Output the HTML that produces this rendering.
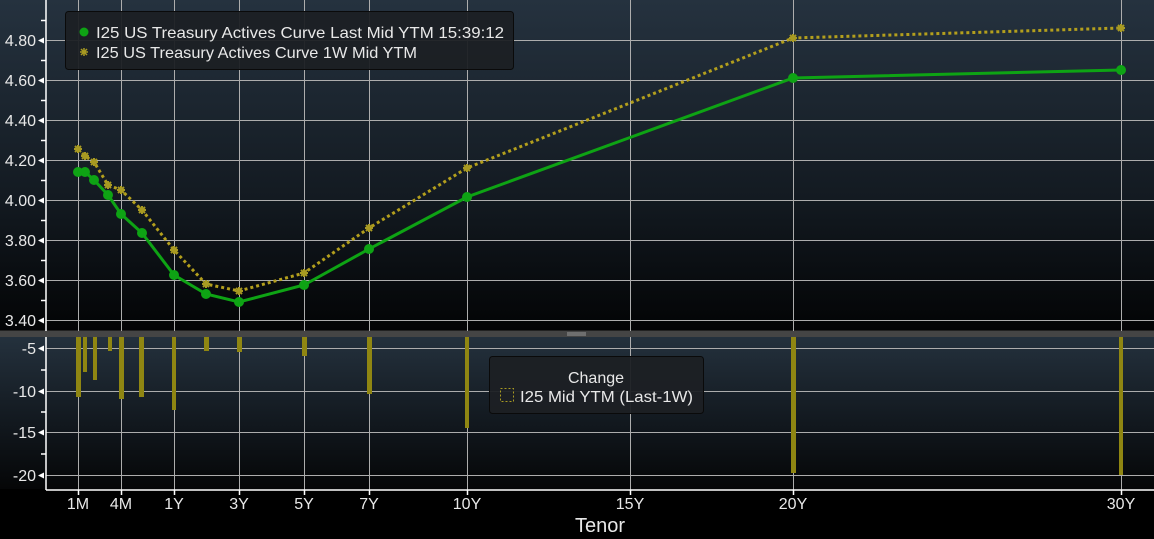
<!DOCTYPE html>
<html><head><meta charset="utf-8"><style>
html,body{margin:0;padding:0;background:#000;width:1154px;height:539px;overflow:hidden}
svg{display:block}
text{font-family:"Liberation Sans",sans-serif;fill:#e8e8e8}
</style></head><body>
<svg width="1154" height="539" viewBox="0 0 1154 539">
<defs>
<linearGradient id="g1" x1="0" y1="0" x2="0" y2="1"><stop offset="0" stop-color="#25323f"/><stop offset="0.6" stop-color="#131a21"/><stop offset="1" stop-color="#030405"/></linearGradient>
<linearGradient id="g2" x1="0" y1="0" x2="0" y2="1"><stop offset="0" stop-color="#24313d"/><stop offset="0.5" stop-color="#141b22"/><stop offset="1" stop-color="#050607"/></linearGradient>
</defs>
<rect width="1154" height="539" fill="#000"/>
<rect x="0" y="0" width="1154" height="331" fill="url(#g1)"/>
<rect x="0" y="337" width="1154" height="152" fill="url(#g2)"/>
<rect x="0" y="331" width="1154" height="6" fill="#454545"/>
<rect x="0" y="330" width="1154" height="1" fill="#222"/>
<line x1="567" y1="333" x2="586" y2="333" stroke="#999"/><line x1="567" y1="335" x2="586" y2="335" stroke="#999"/>
<g stroke="#adadad" stroke-width="1">
<line x1="46" y1="40.5" x2="1154" y2="40.5"/><line x1="46" y1="80.5" x2="1154" y2="80.5"/><line x1="46" y1="120.5" x2="1154" y2="120.5"/><line x1="46" y1="160.5" x2="1154" y2="160.5"/><line x1="46" y1="200.5" x2="1154" y2="200.5"/><line x1="46" y1="240.5" x2="1154" y2="240.5"/><line x1="46" y1="280.5" x2="1154" y2="280.5"/><line x1="46" y1="320.5" x2="1154" y2="320.5"/>
<line x1="46" y1="348.5" x2="1154" y2="348.5"/><line x1="46" y1="391.5" x2="1154" y2="391.5"/><line x1="46" y1="432.5" x2="1154" y2="432.5"/><line x1="46" y1="475.5" x2="1154" y2="475.5"/>
<g>
<line x1="78.5" y1="0" x2="78.5" y2="331"/><line x1="121.5" y1="0" x2="121.5" y2="331"/><line x1="174.5" y1="0" x2="174.5" y2="331"/><line x1="239.5" y1="0" x2="239.5" y2="331"/><line x1="304.5" y1="0" x2="304.5" y2="331"/><line x1="369.5" y1="0" x2="369.5" y2="331"/><line x1="467.5" y1="0" x2="467.5" y2="331"/><line x1="630.5" y1="0" x2="630.5" y2="331"/><line x1="793.5" y1="0" x2="793.5" y2="331"/><line x1="1121.5" y1="0" x2="1121.5" y2="331"/>
<line x1="78.5" y1="337" x2="78.5" y2="490"/><line x1="121.5" y1="337" x2="121.5" y2="490"/><line x1="174.5" y1="337" x2="174.5" y2="490"/><line x1="239.5" y1="337" x2="239.5" y2="490"/><line x1="304.5" y1="337" x2="304.5" y2="490"/><line x1="369.5" y1="337" x2="369.5" y2="490"/><line x1="467.5" y1="337" x2="467.5" y2="490"/><line x1="630.5" y1="337" x2="630.5" y2="490"/><line x1="793.5" y1="337" x2="793.5" y2="490"/><line x1="1121.5" y1="337" x2="1121.5" y2="490"/>
</g>
</g>
<g stroke="#fff" stroke-width="1.5">
<line x1="46" y1="0" x2="46" y2="331"/><line x1="46" y1="337" x2="46" y2="490"/><line x1="46" y1="490" x2="1154" y2="490"/>
<line x1="41" y1="20.5" x2="46" y2="20.5"/><line x1="41" y1="60.5" x2="46" y2="60.5"/><line x1="41" y1="100.5" x2="46" y2="100.5"/><line x1="41" y1="140.5" x2="46" y2="140.5"/><line x1="41" y1="180.5" x2="46" y2="180.5"/><line x1="41" y1="220.5" x2="46" y2="220.5"/><line x1="41" y1="260.5" x2="46" y2="260.5"/><line x1="41" y1="300.5" x2="46" y2="300.5"/>
<line x1="41" y1="370" x2="46" y2="370"/><line x1="41" y1="412" x2="46" y2="412"/><line x1="41" y1="454" x2="46" y2="454"/>
<line x1="78.5" y1="490" x2="78.5" y2="495"/><line x1="121.5" y1="490" x2="121.5" y2="495"/><line x1="174.5" y1="490" x2="174.5" y2="495"/><line x1="239.5" y1="490" x2="239.5" y2="495"/><line x1="304.5" y1="490" x2="304.5" y2="495"/><line x1="369.5" y1="490" x2="369.5" y2="495"/><line x1="467.5" y1="490" x2="467.5" y2="495"/><line x1="630.5" y1="490" x2="630.5" y2="495"/><line x1="793.5" y1="490" x2="793.5" y2="495"/><line x1="1121.5" y1="490" x2="1121.5" y2="495"/>
</g>
<g fill="#fff">
<path d="M38 40.5 L44 37.5 L44 43.5Z"/><path d="M38 80.5 L44 77.5 L44 83.5Z"/><path d="M38 120.5 L44 117.5 L44 123.5Z"/><path d="M38 160.5 L44 157.5 L44 163.5Z"/><path d="M38 200.5 L44 197.5 L44 203.5Z"/><path d="M38 240.5 L44 237.5 L44 243.5Z"/><path d="M38 280.5 L44 277.5 L44 283.5Z"/><path d="M38 320.5 L44 317.5 L44 323.5Z"/>
<path d="M38 348.5 L44 345.5 L44 351.5Z"/><path d="M38 391.5 L44 388.5 L44 394.5Z"/><path d="M38 432.5 L44 429.5 L44 435.5Z"/><path d="M38 475.5 L44 472.5 L44 478.5Z"/>
</g>
<g font-size="16" text-anchor="end">
<text x="36" y="46">4.80</text><text x="36" y="86">4.60</text><text x="36" y="126">4.40</text><text x="36" y="166">4.20</text><text x="36" y="206">4.00</text><text x="36" y="246">3.80</text><text x="36" y="286">3.60</text><text x="36" y="326">3.40</text>
<text x="36" y="354">-5</text><text x="36" y="397">-10</text><text x="36" y="438">-15</text><text x="36" y="481">-20</text>
</g>
<g font-size="16" text-anchor="middle">
<text x="78" y="509">1M</text><text x="121" y="509">4M</text><text x="174" y="509">1Y</text><text x="239" y="509">3Y</text><text x="304" y="509">5Y</text><text x="369" y="509">7Y</text><text x="467" y="509">10Y</text><text x="630" y="509">15Y</text><text x="793" y="509">20Y</text><text x="1121" y="509">30Y</text>
<text x="600" y="532" font-size="20">Tenor</text>
</g>
<g fill="#8f8612">
<rect x="76" y="337" width="5" height="60"/><rect x="83" y="337" width="4" height="35"/><rect x="93" y="337" width="4" height="43"/><rect x="108" y="337" width="4" height="14"/><rect x="119" y="337" width="5" height="62"/><rect x="139" y="337" width="5" height="60"/><rect x="172" y="337" width="4" height="73"/><rect x="204" y="337" width="5" height="14"/><rect x="237" y="337" width="5" height="15"/><rect x="302" y="337" width="5" height="19"/><rect x="367" y="337" width="5" height="57"/><rect x="465" y="337" width="4" height="91"/><rect x="791" y="337" width="5" height="136"/><rect x="1119" y="337" width="4" height="138"/>
</g>
<polyline fill="none" stroke="#b39f1d" stroke-width="3" stroke-dasharray="3,3" points="78,149 85,156 94,162 108,185 121,190 142,210 174,250 206,284 239,291 304,273 369,228 467,168 793,38 1121,28"/>
<g stroke="#a89a22" stroke-width="2">
<path d="M74 149h8M78 145v8M75 146l6 6M81 146l-6 6"/><path d="M81 156h8M85 152v8M82 153l6 6M88 153l-6 6"/><path d="M90 162h8M94 158v8M91 159l6 6M97 159l-6 6"/><path d="M104 185h8M108 181v8M105 182l6 6M111 182l-6 6"/><path d="M117 190h8M121 186v8M118 187l6 6M124 187l-6 6"/><path d="M138 210h8M142 206v8M139 207l6 6M145 207l-6 6"/><path d="M170 250h8M174 246v8M171 247l6 6M177 247l-6 6"/><path d="M202 284h8M206 280v8M203 281l6 6M209 281l-6 6"/><path d="M235 291h8M239 287v8M236 288l6 6M242 288l-6 6"/><path d="M300 273h8M304 269v8M301 270l6 6M307 270l-6 6"/><path d="M365 228h8M369 224v8M366 225l6 6M372 225l-6 6"/><path d="M463 168h8M467 164v8M464 165l6 6M470 165l-6 6"/><path d="M789 38h8M793 34v8M790 35l6 6M796 35l-6 6"/><path d="M1117 28h8M1121 24v8M1118 25l6 6M1124 25l-6 6"/>
</g>
<polyline fill="none" stroke="#0ea314" stroke-width="3" points="78,172 85,172 94,180 108,195 121,214 142,233 174,275 206,294 239,302 304,285 369,249 467,197 793,78 1121,70"/>
<g fill="#0ea314">
<circle cx="78" cy="172" r="5"/><circle cx="85" cy="172" r="5"/><circle cx="94" cy="180" r="5"/><circle cx="108" cy="195" r="5"/><circle cx="121" cy="214" r="5"/><circle cx="142" cy="233" r="5"/><circle cx="174" cy="275" r="5"/><circle cx="206" cy="294" r="5"/><circle cx="239" cy="302" r="5"/><circle cx="304" cy="285" r="5"/><circle cx="369" cy="249" r="5"/><circle cx="467" cy="197" r="5"/><circle cx="793" cy="78" r="5"/><circle cx="1121" cy="70" r="5"/>
</g>
<rect x="65.5" y="11.5" width="448" height="58" rx="3" fill="#1c2024" fill-opacity="0.95" stroke="#0a0a0a"/>
<circle cx="84" cy="32" r="4.5" fill="#0ea314"/>
<g stroke="#a89a22" stroke-width="1.5"><path d="M80 52h8M84 48v8M81 49l6 6M87 49l-6 6"/></g>
<text x="96" y="38" font-size="16" textLength="408" lengthAdjust="spacingAndGlyphs">I25 US Treasury Actives Curve Last Mid YTM 15:39:12</text>
<text x="96" y="58" font-size="16" textLength="321" lengthAdjust="spacingAndGlyphs">I25 US Treasury Actives Curve 1W Mid YTM</text>
<rect x="489.5" y="356.5" width="214" height="57" rx="3" fill="#1c2024" fill-opacity="0.95" stroke="#0a0a0a"/>
<text x="596" y="383" font-size="16" text-anchor="middle">Change</text>
<rect x="500.5" y="388.5" width="13" height="13" fill="none" stroke="#a89a22" stroke-dasharray="2,2"/>
<text x="520" y="402" font-size="16" textLength="173" lengthAdjust="spacingAndGlyphs">I25 Mid YTM (Last-1W)</text>
</svg>
</body></html>
